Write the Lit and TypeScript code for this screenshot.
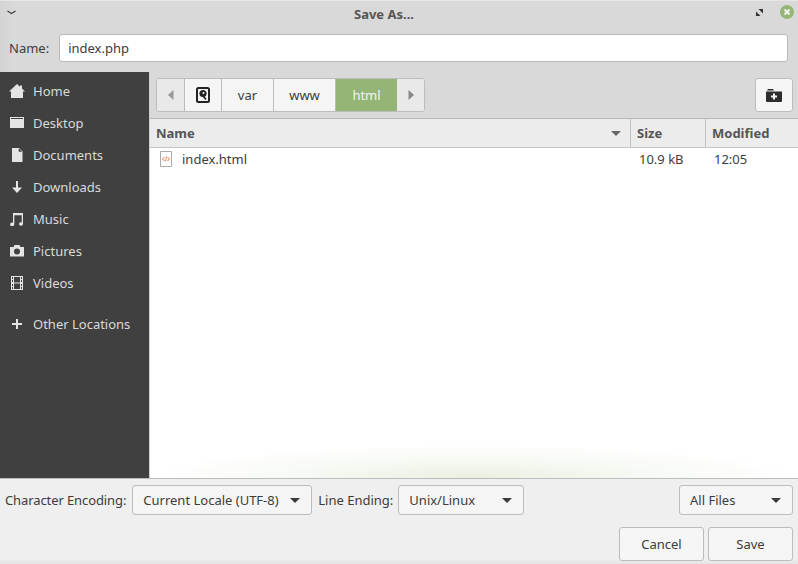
import { LitElement, html, css, svg } from 'lit';
import { customElement } from 'lit/decorators.js';

const places = [
  { label: 'Home', icon: svg`<path d="M8 1 11 3.700V2.500h2v3L16 8.500h-2V15H2V8.500H0z"/>` },
  { label: 'Desktop', icon: svg`<path d="M1 2h14v11H1z"/><path d="M2 3h12v1H2z" fill="#404040"/>` },
  { label: 'Documents', icon: svg`<path d="M3 1h7l3.500 3.500V15H3z"/><path d="M9.700 1.300v3.400h3.400z" fill="#404040"/>` },
  { label: 'Downloads', icon: svg`<path d="M7 2h2v6.500h4L8 14 3 8.500h4z"/>` },
  { label: 'Music', icon: svg`<path d="M4 2h10v11a2 1.700 0 1 1-1.300-1.600V4.200H5.300V13.400a2.100 1.700 0 1 1-1.300-1.600z"/>` },
  { label: 'Pictures', icon: svg`<path fill-rule="evenodd" d="M1 4h3.500l1-2h5l1 2H15v9.500H1zM8 5.500a3 3 0 1 0 0 6 3 3 0 0 0 0-6z"/>` },
  { label: 'Videos', icon: svg`<path fill-rule="evenodd" d="M2 1h12v14H2zM3 2v2h1V2zm9 0v2h1V2zM5 2v5.500h6V2zM3 5v2h1V5zm9 0v2h1V5zM3 9v2h1V9zm2-.500V14h6V8.500zM12 9v2h1V9zM3 12v2h1v-2zm9 0v2h1v-2z"/>` },
];

@customElement('app-root')
export class AppRoot extends LitElement {
  static styles = css`
    :host {
      display: block;
      width: 798px;
      height: 564px;
      overflow: hidden;
      font: 13px 'Noto Sans', sans-serif;
      color: #3c3c3c;
    }
    .window {
      display: grid;
      grid-template-rows: 29px 43px 1fr 86px;
      height: 564px;
      background: linear-gradient(90deg, #d4d4d4, #d9d9d9 14px);
    }
    .titlebar {
      display: grid;
      grid-template-columns: 40px 1fr 70px;
      align-items: center;
      border-top: 1px solid #e6e6e6;
      padding-bottom: 2px;
      font-weight: 700;
      font-size: 13px;
      color: #555;
      text-align: center;
    }
    .menu-btn { padding: 0 0 4px 7px; display: flex; }
    .win-btns { display: flex; align-items: center; gap: 17px; justify-content: flex-end; padding: 0 4px 4px 0; }
    .name-row {
      display: flex;
      align-items: flex-start;
      gap: 10px;
      padding: 5px 10px 0 9px;
    }
    .name-row label { line-height: 28px; }
    .entry {
      flex: 1;
      height: 28px;
      box-sizing: border-box;
      background: #fff;
      border: 1px solid #bababa;
      border-radius: 3px;
      padding-left: 8px;
      line-height: 26px;
    }
    .body {
      display: grid;
      grid-template-columns: 149px 1fr;
      min-height: 0;
    }
    .sidebar {
      background: #404040;
      padding-top: 3px;
      color: #dadada;
    }
    .place {
      display: flex;
      align-items: center;
      gap: 8px;
      height: 32px;
      padding-left: 9px;
    }
    .place svg { fill: #e4e4e4; flex: none; }
    .place.other { margin-top: 9px; }
    .main {
      display: grid;
      grid-template-rows: 47px 29px 1fr;
      min-width: 0;
      border-left: 1px solid #cfcfcf;
    }
    .toolbar {
      display: flex;
      justify-content: space-between;
      padding: 6px 5px 0 6px;
      border-bottom: 1px solid #b9b9b9;
      background: #d9d9d9;
    }
    .pathbar {
      display: flex;
      height: 34px;
      box-sizing: border-box;
      border: 1px solid #bdbdbd;
      border-radius: 3px;
      background: #f5f5f5;
      overflow: hidden;
    }
    .seg {
      display: flex;
      align-items: center;
      justify-content: center;
      box-sizing: border-box;
      border-right: 1px solid #bdbdbd;
    }
    .seg:last-child { border-right: 0; }
    .seg.arrow { background: #e9e9e9; }
    .seg.active { background: #94b576; color: #f2f5ee; border-right: 0; }
    .new-folder {
      display: flex;
      align-items: center;
      justify-content: center;
      width: 38px;
      height: 34px;
      box-sizing: border-box;
      background: #f5f5f5;
      border: 1px solid #bdbdbd;
      border-radius: 3px;
    }
    .columns {
      display: grid;
      grid-template-columns: 481px 75px 1fr;
      background: #ececec;
      border-bottom: 1px solid #c4c4c4;
      font-weight: 700;
      color: #555;
    }
    .columns > div {
      display: flex;
      align-items: center;
      justify-content: space-between;
      padding: 0 9px 0 6px;
      border-right: 1px solid #c4c4c4;
    }
    .columns > div:last-child { border-right: 0; }
    .list {
      background:
        radial-gradient(ellipse 330px 34px at 50% 100%, #e9f0e2, #f6f9f3 50%, rgba(255, 255, 255, 0) 100%),
        #fff;
    }
    .file {
      display: grid;
      grid-template-columns: 481px 75px 1fr;
      height: 22px;
      align-items: center;
    }
    .file .name { display: flex; align-items: center; gap: 10px; padding-left: 10px; }
    .file .size { padding-left: 8px; }
    .file .mod { padding-left: 8px; }
    .footer {
      display: grid;
      grid-template-rows: 30px 34px;
      background: linear-gradient(180deg, #efefef 94%, #e4e4e4), #efefef;
      border-top: 1px solid #bcbcbc;
      box-sizing: border-box;
      padding: 6px 5px 3px 5px;
      row-gap: 12px;
    }
    .filters { display: flex; align-items: center; height: 30px; }
    .enc-label { letter-spacing: -0.1px; }
    .combo {
      display: flex;
      align-items: center;
      justify-content: space-between;
      box-sizing: border-box;
      height: 30px;
      padding: 0 11px 0 10px;
      background: #f5f5f5;
      border: 1px solid #bcbcbc;
      border-radius: 3px;
    }
    .caret { width: 0; height: 0; border: 5px solid transparent; border-top: 5px solid #3c3c3c; border-bottom: 0; }
    .combo.enc { width: 180px; margin: 0 6px 0 6px; }
    .combo.line { width: 126px; margin-left: 5px; }
    .combo.type { width: 114px; margin-left: auto; }
    .actions { display: flex; justify-content: flex-end; gap: 4px; }
    .btn {
      display: flex;
      align-items: center;
      justify-content: center;
      width: 85px;
      height: 34px;
      box-sizing: border-box;
      background: #f5f5f5;
      border: 1px solid #bcbcbc;
      border-radius: 3px;
    }
  `;

  render() {
    return html`
      <div class="window">
        <div class="titlebar">
          <div class="menu-btn">
            <svg width="9" height="5" viewBox="0 0 9 5"><path d="M.5 1 4.500 3.500 8.500 1" fill="none" stroke="#444" stroke-width="1.300"/></svg>
          </div>
          <div>Save As...</div>
          <div class="win-btns">
            <svg width="7" height="7" viewBox="0 0 7 7"><path d="M2.500 0H7v4.500zM0 2.500 4.500 7H0z" fill="#333"/></svg>
            <svg width="14" height="14" viewBox="0 0 14 14"><circle cx="7" cy="7" r="7" fill="#95b676"/><path d="M4.500 4.500l5 5m0-5-5 5" stroke="#f4f6f0" stroke-width="2"/></svg>
          </div>
        </div>

        <div class="name-row">
          <label>Name:</label>
          <div class="entry">index.php</div>
        </div>

        <div class="body">
          <div class="sidebar">
            ${places.map(p => html`
              <div class="place">
                <svg width="16" height="16" viewBox="0 0 16 16">${p.icon}</svg>
                <span>${p.label}</span>
              </div>
            `)}
            <div class="place other">
              <svg width="16" height="16" viewBox="0 0 16 16"><path d="M7 3h2v4h4v2H9v4H7V9H3V7h4z"/></svg>
              <span>Other Locations</span>
            </div>
          </div>

          <div class="main">
            <div class="toolbar">
              <div class="pathbar">
                <div class="seg arrow" style="width:28px">
                  <svg width="6" height="10" viewBox="0 0 6 10"><path d="M5.500 0v10L0 5z" fill="#999"/></svg>
                </div>
                <div class="seg" style="width:37px">
                  <svg width="14" height="16" viewBox="0 0 14 16">
                    <rect x="1" y="1" width="12" height="14" rx="1.500" fill="none" stroke="#222" stroke-width="2"/>
                    <circle cx="7" cy="6.500" r="3.600" fill="#222"/>
                    <circle cx="7.500" cy="6" r="1" fill="#f5f5f5"/>
                    <path d="M7 9l3 3.500" stroke="#222" stroke-width="1.800"/>
                  </svg>
                </div>
                <div class="seg" style="width:52px">var</div>
                <div class="seg" style="width:62px">www</div>
                <div class="seg active" style="width:61px">html</div>
                <div class="seg arrow" style="width:27px">
                  <svg width="6" height="10" viewBox="0 0 6 10"><path d="M.5 0v10L6 5z" fill="#888"/></svg>
                </div>
              </div>
              <div class="new-folder">
                <svg width="16" height="14" viewBox="0 0 16 14">
                  <path d="M1 2.500 2 1h5l1 1.500z" fill="#2d2d2d"/>
                  <path d="M0 3.500h16V13a1 1 0 0 1-1 1H1a1 1 0 0 1-1-1z" fill="#2d2d2d"/>
                  <path d="M7 5.500h2v2h2v2H9v2H7v-2H5v-2h2z" fill="#f5f5f5"/>
                </svg>
              </div>
            </div>

            <div class="columns">
              <div>Name <span class="caret" style="border-top-color:#666"></span></div>
              <div>Size</div>
              <div>Modified</div>
            </div>

            <div class="list">
              <div class="file">
                <div class="name">
                  <svg width="12" height="16" viewBox="0 0 12 16">
                    <path d="M.5.5h11v15H.5z" fill="#fff" stroke="#aaa"/>
                    <path d="M4.500 6 2.500 8l2 2M7.500 6l2 2-2 2" fill="none" stroke="#e8703a" stroke-width="1"/>
                    <path d="M6.500 5.500l-1 5" stroke="#e8703a" stroke-width=".8"/>
                  </svg>
                  <span>index.html</span>
                </div>
                <div class="size">10.9 kB</div>
                <div class="mod">12:05</div>
              </div>
            </div>
          </div>
        </div>

        <div class="footer">
          <div class="filters">
            <span class="enc-label">Character Encoding:</span>
            <div class="combo enc"><span>Current Locale (UTF-8)</span><span class="caret"></span></div>
            <span>Line Ending:</span>
            <div class="combo line"><span>Unix/Linux</span><span class="caret"></span></div>
            <div class="combo type"><span>All Files</span><span class="caret"></span></div>
          </div>
          <div class="actions">
            <div class="btn">Cancel</div>
            <div class="btn">Save</div>
          </div>
        </div>
      </div>
    `;
  }
}
